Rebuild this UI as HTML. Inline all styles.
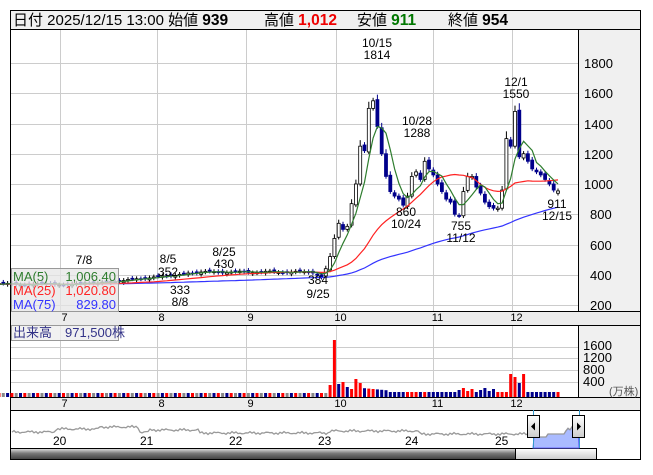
<!DOCTYPE html><html><head><meta charset="utf-8"><style>
body{margin:0;background:#fff;width:653px;height:470px;overflow:hidden;font-family:"Liberation Sans","Noto Sans CJK JP",sans-serif}
svg text{font-family:"Liberation Sans","Noto Sans CJK JP",sans-serif}
</style></head><body>
<svg id="s" width="653" height="470" xmlns="http://www.w3.org/2000/svg">
<rect x="10.5" y="10.5" width="630" height="449" fill="#fff" stroke="#000"/>
<rect x="11" y="11" width="629" height="18" fill="#f0f0f0"/>
<line x1="10" y1="29.5" x2="640" y2="29.5" stroke="#000"/>
<rect x="579" y="30" width="61" height="281" fill="#f0f0f0"/>
<line x1="578.5" y1="30" x2="578.5" y2="311" stroke="#000"/>
<g id="grid"></g>
<rect x="11" y="312" width="629" height="13" fill="#ececec"/>
<line x1="10" y1="311.5" x2="640" y2="311.5" stroke="#000"/>
<line x1="10" y1="325.5" x2="640" y2="325.5" stroke="#000"/>
<rect x="579" y="326" width="61" height="71" fill="#f0f0f0"/>
<line x1="578.5" y1="326" x2="578.5" y2="397" stroke="#000"/>
<rect x="11" y="398" width="629" height="12" fill="#ececec"/>
<line x1="10" y1="397.5" x2="640" y2="397.5" stroke="#000"/>
<line x1="10" y1="410.5" x2="640" y2="410.5" stroke="#000"/>
<g id="d"></g>
<g font-size="15" fill="#000">
<text x="13" y="25">日付 2025/12/15 13:00 始値 <tspan font-weight="bold" font-size="15.5">939</tspan></text>
<text x="264" y="25">高値 <tspan font-weight="bold" font-size="15.5" fill="#e00">1,012</tspan></text>
<text x="357" y="25">安値 <tspan font-weight="bold" font-size="15.5" fill="#070">911</tspan></text>
<text x="448" y="25">終値 <tspan font-weight="bold" font-size="15.5">954</tspan></text>
</g>
<g font-size="13" fill="#000">
<text x="584" y="68">1800</text><text x="584" y="98">1600</text><text x="584" y="129">1400</text><text x="584" y="159">1200</text><text x="584" y="189">1000</text><text x="590" y="219">800</text><text x="590" y="250">600</text><text x="590" y="280">400</text><text x="590" y="310">200</text>
<text x="583" y="350">1600</text><text x="583" y="362">1200</text><text x="583" y="374">800</text><text x="583" y="386">400</text>
<text x="609" y="395" font-size="11" fill="#555">(万株)</text>
</g>
<g font-size="12" fill="#000" text-anchor="middle">
<text x="377" y="47">10/15</text><text x="377" y="59">1814</text>
<text x="417" y="125">10/28</text><text x="417" y="137">1288</text>
<text x="516" y="86">12/1</text><text x="516" y="98">1550</text>
<text x="406" y="216">860</text><text x="406" y="228">10/24</text>
<text x="461" y="230">755</text><text x="461" y="242">11/12</text>
<text x="557" y="208">911</text><text x="557" y="220">12/15</text>
<text x="318" y="284">384</text><text x="318" y="298">9/25</text>
<text x="84" y="264">7/8</text><text x="168" y="263">8/5</text><text x="168" y="276">352</text>
<text x="180" y="294">333</text><text x="180" y="306">8/8</text>
<text x="224" y="256">8/25</text><text x="224" y="268">430</text>
</g>
<rect x="11.5" y="268.5" width="107" height="43" fill="#e6e6e6" fill-opacity="0.75" stroke="#999"/>
<g font-size="13">
<text x="13" y="281" fill="#2e7d2e">MA(5)</text><text x="116" y="281" fill="#2e7d2e" text-anchor="end">1,006.40</text>
<text x="13" y="295" fill="#f22">MA(25)</text><text x="116" y="295" fill="#f22" text-anchor="end">1,020.80</text>
<text x="13" y="309" fill="#33f">MA(75)</text><text x="116" y="309" fill="#33f" text-anchor="end">829.80</text>
</g>
<rect x="11.5" y="325.5" width="107" height="15" fill="#eee" fill-opacity="0.8" stroke="#999"/>
<text x="13" y="337" font-size="13" fill="#338">出来高　971,500株</text>
<defs><linearGradient id="sg" x1="0" y1="0" x2="0" y2="1"><stop offset="0" stop-color="#eee"/><stop offset="0.5" stop-color="#777"/><stop offset="1" stop-color="#444"/></linearGradient>
<linearGradient id="sl" x1="0" y1="0" x2="0" y2="1"><stop offset="0" stop-color="#fff"/><stop offset="1" stop-color="#ccc"/></linearGradient></defs>
<rect x="11" y="448" width="504" height="11" fill="url(#sg)"/>
<rect x="515.5" y="448.5" width="81" height="11" fill="url(#sl)" stroke="#000"/>
<line x1="10" y1="448.5" x2="515" y2="448.5" stroke="#000"/>
<g font-size="12" fill="#000"><text x="53" y="445">20</text><text x="140" y="445">21</text><text x="229" y="445">22</text><text x="318" y="445">23</text><text x="405" y="445">24</text><text x="495" y="445">25</text></g>
<polygon id="na" fill="#aabbff" stroke="#66f"/>
<polyline id="nl" fill="none" stroke="#999" stroke-width="1.3"/>
<line x1="533.5" y1="410" x2="533.5" y2="448" stroke="#39c"/><line x1="579.5" y1="410" x2="579.5" y2="448" stroke="#39c"/>
<rect x="527.5" y="415.5" width="12" height="22" fill="url(#sl)" stroke="#000"/><polygon points="531,426.5 535,422.5 535,430.5" fill="#000"/>
<rect x="572.5" y="415.5" width="12" height="22" fill="url(#sl)" stroke="#000"/><polygon points="581,426.5 577,422.5 577,430.5" fill="#000"/>
</svg>
<script>
var NS="http://www.w3.org/2000/svg",g=document.getElementById('grid'),d=document.getElementById('d');
function el(p,t,a){var e=document.createElementNS(NS,t);for(var k in a)e.setAttribute(k,a[k]);p.appendChild(e);return e}
var vx=[60.5,157.5,246.5,336.5,433.5,512.5];
vx.forEach(function(x){el(g,'line',{x1:x,y1:30,x2:x,y2:311,stroke:'#ccc'});el(g,'line',{x1:x,y1:326,x2:x,y2:397,stroke:'#ccc'})});
for(var p=200;p<=1800;p+=200){var y=Math.round(305-(p-200)*0.15125)+.5;el(g,'line',{x1:11,y1:y,x2:578,y2:y,stroke:'#ccc'})}
[347.5,358.5,370.5,382.5].forEach(function(y){el(g,'line',{x1:11,y1:y,x2:578,y2:y,stroke:'#ccc'})});
var ml=['7','8','9','10','11','12'];
vx.forEach(function(x,i){[321,407].forEach(function(y){var t=el(d,'text',{x:x+4,y:y,'font-size':11,'text-anchor':'middle'});t.textContent=ml[i]})});
var C=[];
for(var i=0;i<42;i++)C.push(338+6*Math.sin(i*.7)+(i>38?i-38:0)*3);
for(i=0;i<24;i++)C.push(345+i*3+4*Math.sin(i));
for(i=0;i<27;i++)C.push(418+6*Math.sin(i*.9));
C=C.concat([400,384,440,520,640,740,700,720,870,1000,1250,1220,1500,1550,1380,1200,1050,950,920,900,860,920,1050,1080,1030,1150,1100,1060,1000,950,900,880,800,790,950,1050,1050,980,940,880,850,840,840,960,1300,1250,1480,1180,1200,1150,1100,1080,1060,1030,1000,960,954]);
var N=C.length,Y=function(p){return 305-(p-200)*0.15125},X=function(i){return 558-(N-1-i)*4.3};
var vol={};vol[N-53]=[57,1];vol[N-52]=[13,0];vol[N-51]=[15,1];vol[N-50]=[10,0];vol[N-49]=[8,1];vol[N-48]=[18,1];vol[N-47]=[14,1];
vol[N-12]=[23,1];vol[N-11]=[20,1];vol[N-10]=[14,0];vol[N-9]=[23,1];
for(i=1;i<N;i++){var o=C[i-1]+(i%3-1)*8,c=C[i];if(i==N-1){o=939;c=954}
 var hi=Math.max(o,c)+15+Math.abs(c-o)*0.1,lo=Math.min(o,c)-15;
 var x=X(i),up=c>=o,col=up?'#000':'#00008b';
 el(d,'line',{x1:x,y1:Y(hi),x2:x,y2:Y(lo),stroke:col});
 var t=Math.min(Y(o),Y(c)),h=Math.max(1,Math.abs(Y(o)-Y(c)));
 el(d,'rect',{x:x-1.5,y:t,width:3,height:h,fill:up?'#fff':'#00008b',stroke:col,'stroke-width':.8});
 var v,vc;
 if(vol[i]){v=vol[i][0];vc=vol[i][1]?'#f00':'#00008b'}
 else if(i<N-54){v=4;vc=['#00008b','#f00','#888'][i%3]}
 else{v=i<N-40?(12-0.4*(i-(N-54))):(i<N-25?5:(i<N-15?5+((i*7)%5):5));vc=up?'#f00':'#00008b'}
 el(d,'rect',{x:x-1.5,y:397-v,width:3,height:v,fill:vc});
}
function ma(n,col){var pts=[];for(var i=0;i<N;i++){var s=0,k=0;for(var j=Math.max(0,i-n+1);j<=i;j++){s+=C[j];k++}pts.push(X(i).toFixed(1)+','+Y(s/k).toFixed(1))}el(d,'polyline',{points:pts.join(' '),fill:'none',stroke:col,'stroke-width':1.2})}
ma(75,'#33f');ma(25,'#f22');ma(5,'#2e7d2e');
var pts=[],ap=[];for(var x=12;x<=579;x+=2){var n=Math.sin(x*1.7)*0.8+Math.sin(x*0.37)*0.7;var y;
 if(x<533){y=x<55?432:x<100?429:x<140?427:x<150?432:x<200?430:x<330?433:x<420?431:434;y+=n}
 else{y=x<548?437:x<566?434:429+n*1.5}
 pts.push(x+','+y.toFixed(1));if(x>=533)ap.push(x+','+y.toFixed(1))}
document.getElementById('nl').setAttribute('points',pts.join(' '));
document.getElementById('na').setAttribute('points','533,448 '+ap.join(' ')+' 579,448');
</script>
</body></html>
